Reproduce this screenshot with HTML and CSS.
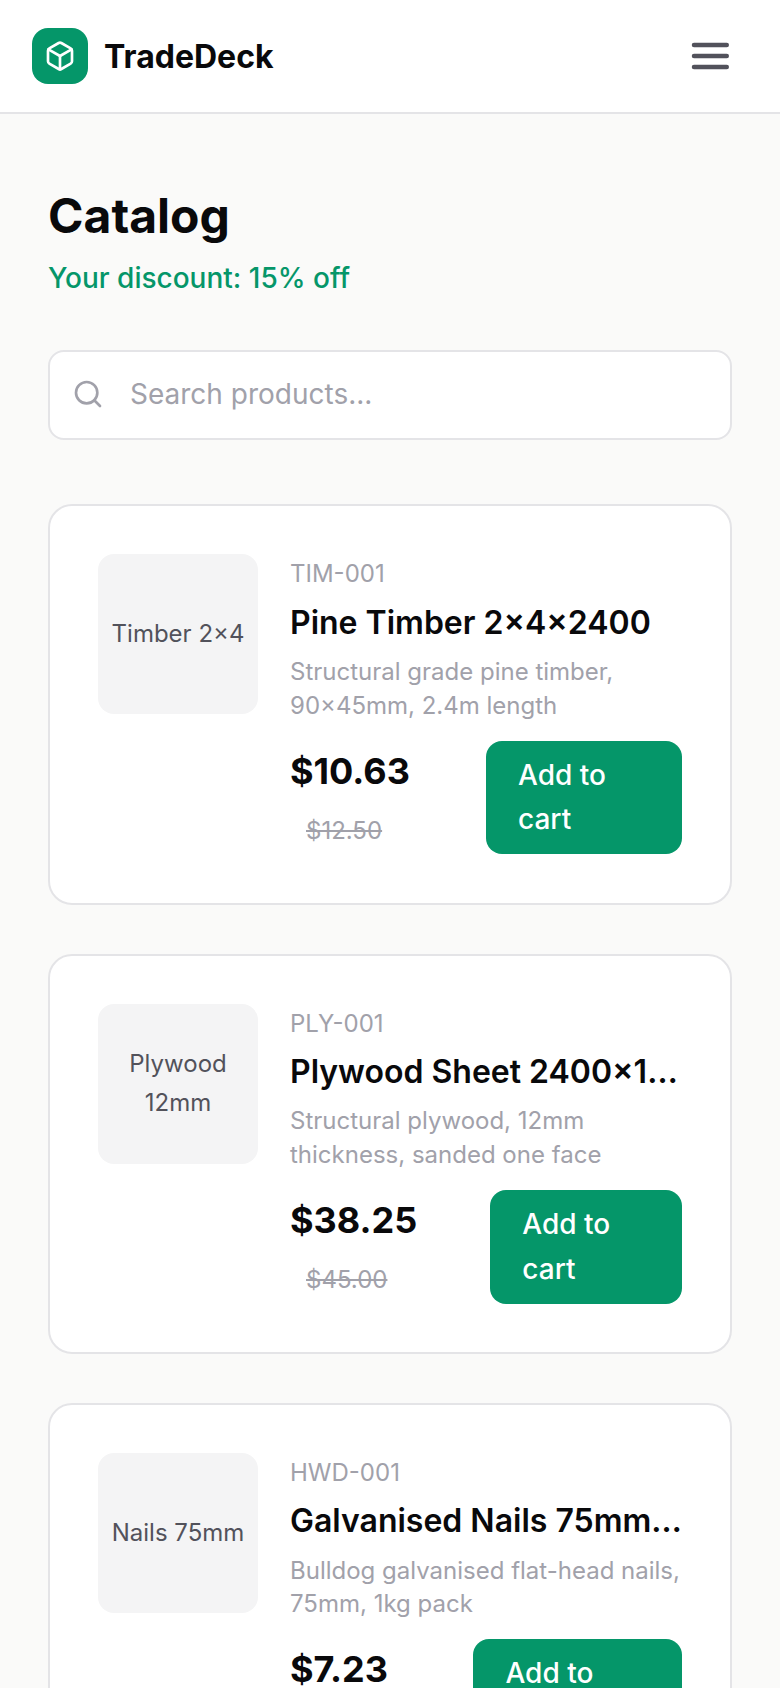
FILE: index.html
```html
<!DOCTYPE html>
<html lang="en">
<head>
<meta charset="utf-8">
<title>TradeDeck Catalog</title>
<link rel="stylesheet" href="styles.css">
</head>
<body>
<header class="topbar">
  <div class="brand">
    <span class="brand-mark">
      <svg class="brand-icon" viewBox="0 0 24 24" fill="none" stroke="currentColor" stroke-width="2" stroke-linecap="round" stroke-linejoin="round"><path d="M21 8a2 2 0 0 0-1-1.73l-7-4a2 2 0 0 0-2 0l-7 4A2 2 0 0 0 3 8v8a2 2 0 0 0 1 1.73l7 4a2 2 0 0 0 2 0l7-4A2 2 0 0 0 21 16Z"/><path d="m3.3 7 8.7 5 8.7-5"/><path d="M12 22V12"/></svg>
    </span>
    <span class="brand-name">TradeDeck</span>
  </div>
  <button class="menu-btn" aria-label="Menu">
    <svg class="menu-icon" viewBox="0 0 44 44" fill="none" stroke="currentColor" stroke-width="4.5" stroke-linecap="round"><path d="M6 11h32.75"/><path d="M6 22h32.75"/><path d="M6 33h32.75"/></svg>
  </button>
</header>
<main class="content">
  <div class="page-head">
    <h1 class="page-title">Catalog</h1>
    <p class="discount">Your discount: 15% off</p>
  </div>
  <label class="search">
    <svg class="search-icon" viewBox="0 0 24 24" fill="none" stroke="currentColor" stroke-width="2" stroke-linecap="round" stroke-linejoin="round"><circle cx="11" cy="11" r="8"/><path d="m21 21-4.3-4.3"/></svg>
    <span class="search-placeholder">Search products...</span>
  </label>
  <section class="product-list">
    <article class="card">
      <div class="thumb">Timber 2×4</div>
      <div class="info">
        <div class="sku">TIM-001</div>
        <h2 class="name">Pine Timber 2×4×2400</h2>
        <p class="desc">Structural grade pine timber, 90×45mm, 2.4m length</p>
        <div class="buy">
          <div class="prices"><span class="price">$10.63</span> <span class="old-price">$12.50</span></div>
          <button class="add">Add to cart</button>
        </div>
      </div>
    </article>
    <article class="card">
      <div class="thumb">Plywood 12mm</div>
      <div class="info">
        <div class="sku">PLY-001</div>
        <h2 class="name">Plywood Sheet 2400×1200×12mm</h2>
        <p class="desc">Structural plywood, 12mm thickness, sanded one face</p>
        <div class="buy">
          <div class="prices"><span class="price">$38.25</span> <span class="old-price">$45.00</span></div>
          <button class="add">Add to cart</button>
        </div>
      </div>
    </article>
    <article class="card">
      <div class="thumb">Nails 75mm</div>
      <div class="info">
        <div class="sku">HWD-001</div>
        <h2 class="name">Galvanised Nails 75mm 1kg Pack</h2>
        <p class="desc">Bulldog galvanised flat-head nails, 75mm, 1kg pack</p>
        <div class="buy">
          <div class="prices"><span class="price">$7.23</span> <span class="old-price">$8.50</span></div>
          <button class="add">Add to cart</button>
        </div>
      </div>
    </article>
  </section>
</main>
</body>
</html>
```
FILE: styles.css
```css
* { box-sizing: border-box; }
html, body { margin: 0; padding: 0; }
body {
  height: 100vh;
  overflow: hidden;
  background: #fafaf9;
  color: #09090b;
  font-family: Inter, "Liberation Sans", sans-serif;
  font-size: 28px;
  line-height: 1.6;
}
.topbar {
  display: flex;
  align-items: center;
  justify-content: space-between;
  height: 114px;
  padding: 0 32px;
  background: #fff;
  border-bottom: 2px solid #e4e4e7;
}
.brand { display: flex; align-items: center; gap: 16px; }
.brand-mark {
  display: flex;
  align-items: center;
  justify-content: center;
  width: 56px;
  height: 56px;
  border-radius: 16px;
  background: #059669;
  color: #fff;
}
.brand-icon { width: 32px; height: 32px; }
.brand-name { margin-top: 2px; font-size: 32px; font-weight: 700; }
.menu-btn {
  display: flex;
  padding: 16px;
  border: 0;
  background: none;
  color: #52525b;
}
.menu-icon { width: 44px; height: 44px; }
.content { padding: 64px 48px; }
.page-head { margin-bottom: 49px; }
.page-title { margin: 0 0 1px; font-size: 48px; font-weight: 700; line-height: 1.6; }
.discount { margin: 0; color: #059669; font-weight: 500; }
.search {
  display: flex;
  align-items: center;
  gap: 26px;
  padding: 20px 22px 22px;
  background: #fff;
  border: 2px solid #e4e4e7;
  border-radius: 16px;
  color: #a1a1aa;
  margin-bottom: 64px;
}
.search-icon { width: 32px; height: 32px; flex: none; }
.product-list { display: flex; flex-direction: column; gap: 49px; }
.card {
  display: flex;
  gap: 32px;
  padding: 48px;
  background: #fff;
  border: 2px solid #e4e4e7;
  border-radius: 24px;
}
.thumb {
  display: flex;
  flex: none;
  align-items: center;
  justify-content: center;
  width: 160px;
  height: 160px;
  padding: 0 8px;
  border-radius: 16px;
  background: #f4f4f5;
  color: #52525b;
  font-size: 24px;
  text-align: center;
}
.info { flex: 1; min-width: 0; }
.sku { margin-top: 1px; color: #a1a1aa; font-size: 24px; }
.name {
  margin: 3px 0 7px;
  overflow: hidden;
  font-size: 32px;
  font-weight: 600;
  line-height: 1.6;
  text-overflow: ellipsis;
  white-space: nowrap;
}
.desc { margin: 0 0 18px; color: #a1a1aa; font-size: 24px; line-height: 1.4; }
.buy { display: flex; align-items: center; justify-content: space-between; }
.prices { padding-top: 3.4px; font-size: 36px; font-weight: 700; line-height: 55.6px; }
.old-price { margin-left: 16px; color: #a1a1aa; font-size: 24px; font-weight: 400; line-height: 38.4px; text-decoration: line-through; }
.add {
  padding: 12px 32px;
  border: 0;
  border-radius: 16px;
  background: #059669;
  color: #fff;
  font: 500 28px/1.6 Inter, "Liberation Sans", sans-serif;
  text-align: left;
}
```
